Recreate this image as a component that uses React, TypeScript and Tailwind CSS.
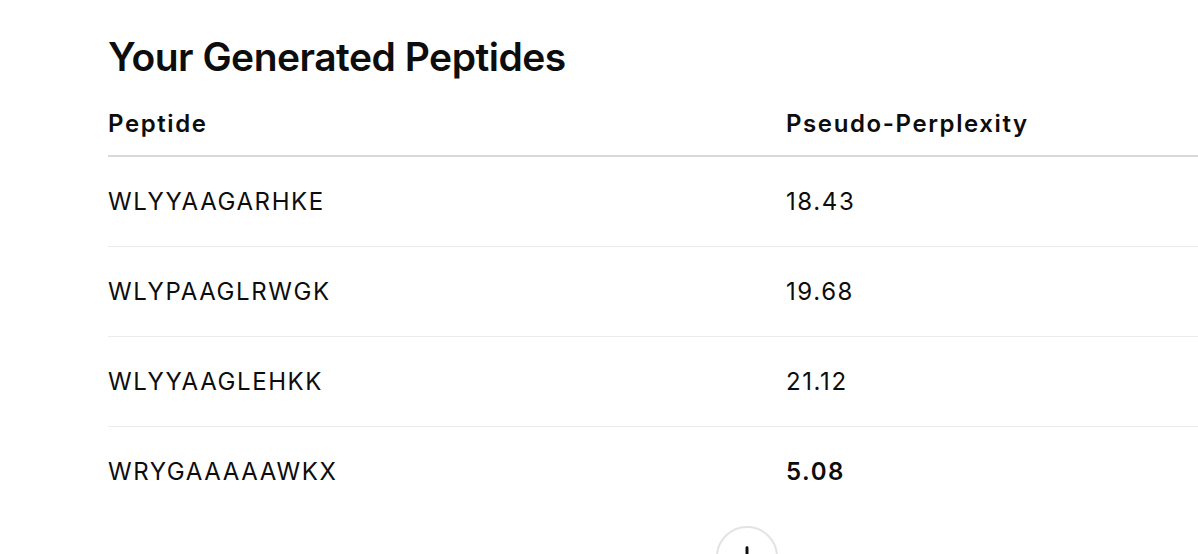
import { ArrowDown } from "lucide-react";

const rows = [
  { peptide: "WLYYAAGARHKE", score: "18.43", best: false },
  { peptide: "WLYPAAGLRWGK", score: "19.68", best: false },
  { peptide: "WLYYAAGLEHKK", score: "21.12", best: false },
  { peptide: "WRYGAAAAAWKX", score: "5.08", best: true },
];

const App = () => {
  return (
    <div
      className="relative h-[554px] w-[1198px] overflow-hidden bg-white text-[#0d0d0d]"
      style={{ fontFamily: "Inter, 'Noto Sans', sans-serif" }}
    >
      <div className="pl-[108px] pt-[35px]">
        <h2 className="mb-[12px] text-[39px] font-semibold leading-[44px] tracking-[-0.5px]">
          Your Generated Peptides
        </h2>
        <table className="w-[1100px] border-collapse text-left text-[24px] leading-[32px] tracking-[1.6px]">
          <thead>
            <tr className="border-b-2 border-[#d9d9d9]">
              <th className="w-[678px] pt-[17px] pb-[15px] font-semibold">Peptide</th>
              <th className="pt-[17px] pb-[15px] font-semibold">Pseudo-Perplexity</th>
            </tr>
          </thead>
          <tbody>
            {rows.map((r, i) => (
              <tr
                key={r.peptide}
                className={i < rows.length - 1 ? "border-b border-[#ececec]" : ""}
              >
                <td className="pt-[29px] pb-[28px] font-normal">{r.peptide}</td>
                <td
                  className={
                    r.best
                      ? "pt-[29px] pb-[28px] font-semibold"
                      : "pt-[29px] pb-[28px] font-normal"
                  }
                >
                  {r.score}
                </td>
              </tr>
            ))}
          </tbody>
        </table>
      </div>

      <button className="absolute left-[716px] top-[526px] flex h-[62px] w-[62px] items-start justify-center rounded-full border-2 border-[#e3e3e3] bg-white pt-[13px]">
        <ArrowDown size={32} strokeWidth={2.2} className="text-[#0d0d0d]" />
      </button>
    </div>
  );
};

export default App;
